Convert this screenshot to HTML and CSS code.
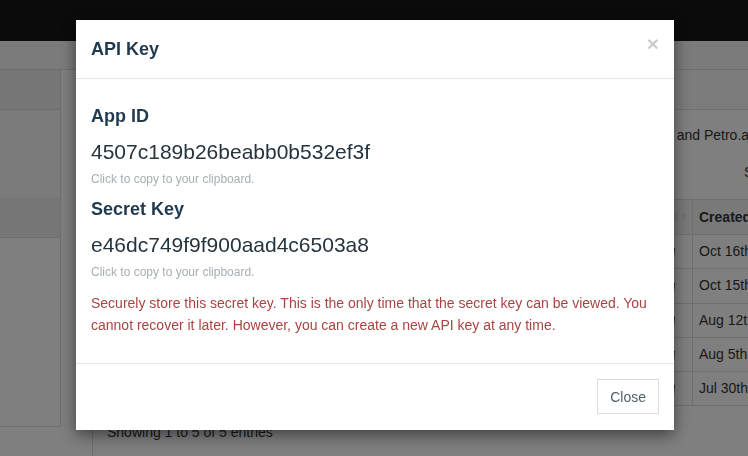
FILE: index.html
```html
<!DOCTYPE html>
<html lang="en">
<head>
<meta charset="utf-8">
<title>API Keys</title>
<link rel="stylesheet" href="styles.css">
</head>
<body>
<div class="page">
  <header class="navbar"></header>
  <div class="subbar"></div>
  <div class="content">
    <aside class="sidebar">
      <div class="side-head"></div>
      <div class="side-gap"></div>
      <div class="side-item"></div>
    </aside>
    <main class="main">
      <div class="main-head"></div>
      <div class="main-body">
        <p class="intro">API keys enable secure, authenticated communication between all of your own applications and Petro.ai services.</p>
        <div class="toolbar">
          <label class="length">Show <span class="select">10</span> entries</label>
          <label class="filter">Search: <span class="search-box"></span></label>
        </div>
        <table class="keys">
          <colgroup>
            <col class="c-name"><col class="c-id"><col class="c-act"><col class="c-created"><col class="c-by">
          </colgroup>
          <thead>
            <tr><th>Name</th><th>App ID</th><th class="sortable"><span class="sort">↓↑</span></th><th>Created</th><th>Created By</th></tr>
          </thead>
          <tbody>
            <tr><td>Production sync</td><td>4507c189b26beabb0b532ef3f</td><td class="act"><svg class="trash" viewBox="0 0 10 12" width="10" height="12"><path d="M1 2.5h8M3.5 2.5V1h3v1.5M2 3.5l.6 7.5h4.8L8 3.5z" fill="none" stroke="currentColor" stroke-width="1.6"/></svg></td><td>Oct 16th, 2018</td><td>admin</td></tr>
            <tr><td>Reporting</td><td>9a1be0c77d21f0c4e8a5b3d19</td><td class="act"><svg class="trash" viewBox="0 0 10 12" width="10" height="12"><path d="M1 2.5h8M3.5 2.5V1h3v1.5M2 3.5l.6 7.5h4.8L8 3.5z" fill="none" stroke="currentColor" stroke-width="1.6"/></svg></td><td>Oct 15th, 2018</td><td>admin</td></tr>
            <tr><td>Well data import</td><td>c2f70a9e18b4d56e03fa71c8e</td><td class="act"><svg class="trash" viewBox="0 0 10 12" width="10" height="12"><path d="M1 2.5h8M3.5 2.5V1h3v1.5M2 3.5l.6 7.5h4.8L8 3.5z" fill="none" stroke="currentColor" stroke-width="1.6"/></svg></td><td>Aug 12th, 2018</td><td>admin</td></tr>
            <tr><td>Dashboard</td><td>71d0e4b9a3c58f2e6b0d94a1c</td><td class="act"><svg class="trash" viewBox="0 0 10 12" width="10" height="12"><path d="M1 2.5h8M3.5 2.5V1h3v1.5M2 3.5l.6 7.5h4.8L8 3.5z" fill="none" stroke="currentColor" stroke-width="1.6"/></svg></td><td>Aug 5th, 2018</td><td>admin</td></tr>
            <tr><td>Test</td><td>0be83f6a2d91c7e45a0f1b6d3</td><td class="act"><svg class="trash" viewBox="0 0 10 12" width="10" height="12"><path d="M1 2.5h8M3.5 2.5V1h3v1.5M2 3.5l.6 7.5h4.8L8 3.5z" fill="none" stroke="currentColor" stroke-width="1.6"/></svg></td><td>Jul 30th, 2018</td><td>admin</td></tr>
          </tbody>
        </table>
        <div class="info">Showing 1 to 5 of 5 entries</div>
      </div>
    </main>
  </div>
</div>

<div class="backdrop"></div>
<div class="modal">
  <div class="modal-content">
    <div class="modal-header">
      <h4 class="modal-title">API Key</h4>
      <span class="close">×</span>
    </div>
    <div class="modal-body">
      <section class="field">
        <h3 class="field-label">App ID</h3>
        <div class="field-value">4507c189b26beabb0b532ef3f</div>
        <div class="hint">Click to copy to your clipboard.</div>
      </section>
      <section class="field">
        <h3 class="field-label">Secret Key</h3>
        <div class="field-value">e46dc749f9f900aad4c6503a8</div>
        <div class="hint">Click to copy to your clipboard.</div>
      </section>
      <p class="warning">Securely store this secret key. This is the only time that the secret key can be viewed. You cannot recover it later. However, you can create a new API key at any time.</p>
    </div>
    <div class="modal-footer">
      <button class="btn" type="button">Close</button>
    </div>
  </div>
</div>
</body>
</html>
```

FILE: styles.css
```css
* { box-sizing: border-box; }

html, body {
  margin: 0;
  overflow: hidden;
}

body {
  width: 748px;
  height: 456px;
  font-family: "Liberation Sans", Arial, sans-serif;
  font-size: 14px;
  color: #333;
  background: #fff;
}

/* ---------- background page ---------- */
.page { width: 1100px; }

.navbar {
  height: 41px;
  background: #161616;
}

.subbar {
  height: 29px;
  background: #f6f6f6;
  border-bottom: 1px solid #dcdcdc;
}

.content {
  display: flex;
  align-items: flex-start;
}

.sidebar {
  width: 61px;
  height: 357px;
  background: #fff;
  border-right: 1px solid #dcdcdc;
  border-bottom: 1px solid #dcdcdc;
}

.side-head {
  height: 40px;
  background: #efefef;
  border-bottom: 1px solid #dcdcdc;
}

.side-gap {
  height: 88px;
  background: #f6f6f6;
}

.side-item {
  height: 40px;
  background: #ededed;
  border-bottom: 1px solid #dcdcdc;
}

.main {
  flex: 1;
  margin-left: 31px;
  min-height: 400px;
  border-left: 1px solid #dcdcdc;
  background: #fff;
}

.main-head {
  height: 40px;
  background: #f9f9f9;
  border-bottom: 1px solid #dcdcdc;
}

.main-body {
  padding: 15px 15px 0 14px;
}

.intro {
  margin: 0;
  line-height: 20px;
  white-space: nowrap;
}

.toolbar {
  display: grid;
  grid-template-columns: 637px auto;
  align-items: center;
  height: 30px;
  margin-top: 12px;
}

.select {
  display: inline-block;
  border: 1px solid #ccc;
  padding: 3px 6px;
}

.filter {
  display: flex;
  align-items: center;
  gap: 6px;
}

.search-box {
  display: inline-block;
  width: 180px;
  height: 30px;
  border: 1px solid #ccc;
}

.keys {
  margin-top: 12px;
  border-collapse: collapse;
  table-layout: fixed;
  width: 905px;
  border: 1px solid #dcdcdc;
}

.c-name { width: 201px; }
.c-id { width: 270px; }
.c-act { width: 114px; }
.c-created { width: 160px; }
.c-by { width: 160px; }

.keys th,
.keys td {
  border: 1px solid #dcdcdc;
  padding: 7px 6px;
  line-height: 19.3px;
  text-align: left;
  white-space: nowrap;
  overflow: hidden;
}

.keys th {
  font-weight: bold;
  background: #f3f3f3;
  line-height: 19px;
}

.keys th.sortable { text-align: right; padding-right: 6px; }

.sort {
  font-family: "DejaVu Sans", sans-serif;
  font-size: 11px;
  letter-spacing: -2px;
  color: #e2e2e2;
}

.keys td.act {
  text-align: right;
  padding-right: 16px;
}

.trash {
  display: inline-block;
  vertical-align: middle;
  color: #7a2a2e;
}

.info {
  margin-top: 16px;
  line-height: 20px;
}

/* ---------- modal ---------- */
.backdrop {
  position: fixed;
  inset: 0;
  background: rgba(0, 0, 0, 0.5);
}

.modal {
  position: fixed;
  inset: 0;
  display: flex;
  justify-content: center;
  align-items: flex-start;
  padding: 20px 0 0 2px;
}

.modal-content {
  width: 598px;
  background: #fff;
  box-shadow: 0 5px 15px rgba(0, 0, 0, 0.5);
}

.modal-header {
  display: flex;
  justify-content: space-between;
  align-items: flex-start;
  padding: 15px;
  border-bottom: 1px solid #e5e5e5;
}

.modal-title {
  margin: 0;
  font-size: 18px;
  font-weight: bold;
  line-height: 28px;
  color: #1f3a4e;
}

.close {
  margin-top: -2px;
  font-size: 21px;
  font-weight: bold;
  line-height: 21px;
  color: #000;
  opacity: 0.2;
}

.modal-body {
  padding: 27px 15px 15px;
}

.field + .field { margin-top: 11px; }

.field-label {
  margin: 0;
  font-size: 18px;
  font-weight: bold;
  line-height: 20px;
  color: #1f3a4e;
}

.field-value {
  margin-top: 14px;
  font-size: 21px;
  line-height: 24px;
  color: #25343f;
}

.hint {
  margin-top: 7px;
  font-size: 12px;
  line-height: 17px;
  color: #a7aeb5;
}

.warning {
  margin: 11px 0 12px;
  font-size: 14px;
  line-height: 22px;
  color: #a94442;
}

.modal-footer {
  display: flex;
  justify-content: flex-end;
  padding: 15px 15px 16px;
  border-top: 1px solid #e5e5e5;
}

.btn {
  height: 35px;
  padding: 0 12px;
  font-family: "Liberation Sans", Arial, sans-serif;
  font-size: 14px;
  color: #4f5d6b;
  background: #fff;
  border: 1px solid #d5dee6;
  border-radius: 0;
}
```
